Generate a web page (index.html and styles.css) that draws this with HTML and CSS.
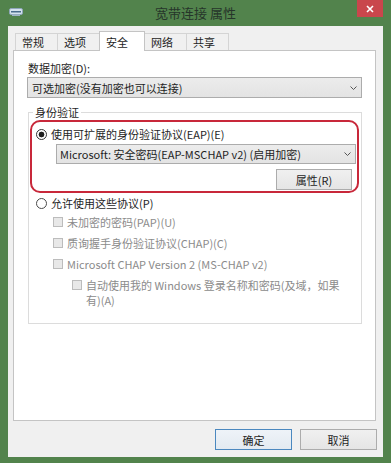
FILE: index.html
```html
<!DOCTYPE html>
<html lang="zh-CN">
<head>
  <meta charset="UTF-8" />
  <meta name="viewport" content="width=device-width, initial-scale=1.0" />
  <title>宽带连接 属性</title>
  <link rel="stylesheet" href="styles.css">
</head>
<body>
  <div class="window">
    <div class="titlebar">
      <div class="title-side">
        <svg class="app-icon" width="14" height="8" viewBox="0 0 14 8">
          <rect x="0.5" y="0.5" width="13" height="6" rx="1.5" fill="#d5e2ee" stroke="#8fa6ba" />
          <rect x="2" y="3" width="10" height="1.5" fill="#4a6c8c" />
          <rect x="3" y="6.5" width="8" height="1.5" fill="#9fb3c4" />
        </svg>
      </div>
      <div class="title">宽带连接 属性</div>
      <div class="title-side right">
        <div class="close">
          <svg width="8" height="8" viewBox="0 0 8 8">
            <path d="M1 1 L7 7 M7 1 L1 7" stroke="#fff" stroke-width="1.6" />
          </svg>
        </div>
      </div>
    </div>

    <div class="client">
      <div class="tabs">
        <div class="tab">常规</div>
        <div class="tab">选项</div>
        <div class="tab active">安全</div>
        <div class="tab">网络</div>
        <div class="tab">共享</div>
      </div>

      <div class="panel">
        <div class="field-label">数据加密(D):</div>
        <div class="select">
          <span>可选加密(没有加密也可以连接)</span>
          <svg class="chevron" width="7" height="4" viewBox="0 0 7 4"><path d="M0.5 0.5 L3.5 3.5 L6.5 0.5" fill="none" stroke="#555" /></svg>
        </div>

        <fieldset class="group">
          <legend>身份验证</legend>
          <div class="highlight">
            <div class="option"><span class="radio checked"></span>使用可扩展的身份验证协议(EAP)(E)</div>
            <div class="select eap">
              <span>Microsoft: 安全密码(EAP-MSCHAP v2) (启用加密)</span>
              <svg class="chevron" width="7" height="4" viewBox="0 0 7 4"><path d="M0.5 0.5 L3.5 3.5 L6.5 0.5" fill="none" stroke="#555" /></svg>
            </div>
            <div class="btn-row"><button class="btn small">属性(R)</button></div>
          </div>

          <div class="option plain"><span class="radio"></span>允许使用这些协议(P)</div>
          <div class="checks">
            <div class="check"><span class="box"></span>未加密的密码(PAP)(U)</div>
            <div class="check"><span class="box"></span>质询握手身份验证协议(CHAP)(C)</div>
            <div class="check"><span class="box"></span>Microsoft CHAP Version 2 (MS-CHAP v2)</div>
            <div class="check nested"><span class="box"></span><span class="wrap">自动使用我的 Windows 登录名称和密码(及域，如果有)(A)</span></div>
          </div>
        </fieldset>
      </div>

      <div class="actions">
        <button class="btn default">确定</button>
        <button class="btn">取消</button>
      </div>
    </div>
  </div>
</body>
</html>
```

FILE: styles.css
```css
* {
  box-sizing: border-box;
}
body {
  margin: 0;
  background: #52834c;
  font-family: "Noto Sans CJK SC", "Noto Sans", sans-serif;
  font-size: 11px;
  color: #1e1e1e;
}
.window {
  width: 391px;
  height: 463px;
  display: flex;
  flex-direction: column;
}

/* title bar */
.titlebar {
  height: 26px;
  display: flex;
  align-items: flex-start;
}
.title-side {
  width: 34px;
  padding: 8px 0 0 9px;
}
.title-side.right {
  padding: 0 8px 0 0;
}
.app-icon {
  display: block;
}
.title {
  flex: 1;
  text-align: center;
  font-size: 13px;
  line-height: 26px;
  color: #26352a;
}
.close {
  width: 26px;
  height: 17px;
  background: #c9464c;
  display: flex;
  align-items: center;
  justify-content: center;
}

/* client area */
.client {
  margin: 0 8px;
  height: 431px;
  background: #f0f0f0;
  padding: 5px 7px 0 5px;
}
.tabs {
  display: flex;
  height: 19px;
  padding-left: 2px;
}
.tab {
  margin-top: 2px;
  margin-right: -1px;
  height: 17px;
  border: 1px solid #d4d4d4;
  border-bottom: none;
  background: #f0f0f0;
  padding: 0 13px 0 6px;
  line-height: 16px;
}
.tab.active {
  position: relative;
  z-index: 1;
  margin-top: 0;
  height: 20px;
  background: #fff;
  border-color: #c4c4c4;
  padding-right: 16px;
  line-height: 20px;
}
.panel {
  height: 371px;
  background: #fff;
  border: 1px solid #c4c4c4;
  padding: 10px 13px 0 13px;
}
.field-label {
  line-height: 14px;
  padding-left: 1px;
}
.select {
  display: flex;
  align-items: center;
  justify-content: space-between;
  height: 21px;
  margin-top: 2px;
  border: 1px solid #acacac;
  background: linear-gradient(#ececec, #e3e3e3);
  padding: 0 4px 0 4px;
  line-height: 14px;
}
.chevron {
  display: block;
}

/* group box */
.group {
  margin: 7px 0 0 1px;
  padding: 0 0 15px;
  border: 1px solid #dcdcdc;
  min-width: 0;
}
.group legend {
  margin-left: 4px;
  padding: 0 2px;
  line-height: 14px;
}
.highlight {
  margin: 1px 2px 0 1px;
  border: 2px solid #c8283a;
  border-radius: 10px;
  padding: 5px 5px 1px 4px;
}
.option {
  display: flex;
  align-items: center;
  gap: 4px;
  line-height: 14px;
}
.option.plain {
  margin: 3px 0 0 7px;
}
.radio {
  width: 11px;
  height: 11px;
  border: 1px solid #4a4a4a;
  border-radius: 50%;
  background: #fff;
}
.radio.checked {
  border-color: #333;
  background: radial-gradient(circle, #1e1e1e 0 2.6px, #fff 3.2px);
}
.select.eap {
  margin: 3px 0 0 20px;
  width: 300px;
  height: 20px;
  padding-left: 3px;
}
.btn-row {
  display: flex;
  justify-content: flex-end;
  margin-top: 5px;
}
.btn {
  width: 77px;
  height: 21px;
  padding: 0;
  border: 1px solid #acacac;
  background: linear-gradient(#f0f0f0, #e5e5e5);
  font: inherit;
  color: #1e1e1e;
}
.btn.small {
  width: 76px;
}
.btn.default {
  border-color: #4b88bf;
  background: linear-gradient(#eef3f8, #e3eaf1);
}

.checks {
  display: flex;
  flex-direction: column;
  gap: 7px;
  margin: 5px 0 0 24px;
  color: #8b8b8b;
}
.check {
  display: flex;
  align-items: flex-start;
  gap: 4px;
  line-height: 14px;
}
.check.nested {
  margin-left: 19px;
  line-height: 15px;
}
.box {
  flex: none;
  width: 10px;
  height: 10px;
  margin-top: 2px;
  border: 1px solid #bcbcbc;
  background: #e8e8e8;
}
.wrap {
  width: 262px;
}

.actions {
  display: flex;
  justify-content: flex-end;
  gap: 8px;
  margin: 8px -1px 0 0;
}
```
